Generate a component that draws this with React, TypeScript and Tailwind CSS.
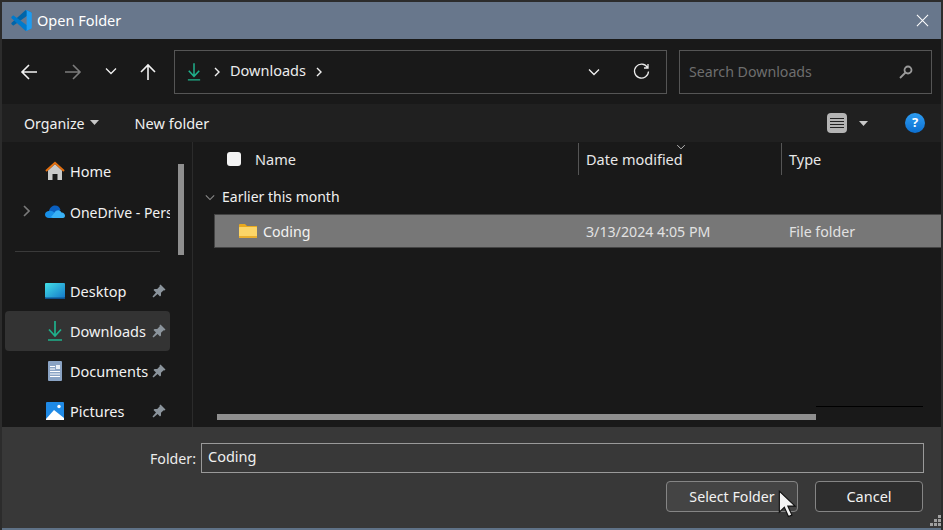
import type React from "react"

const font = "font-['Noto_Sans','Liberation_Sans',sans-serif]"

const VsCodeIcon = () => (
  <svg width="21" height="21" viewBox="0 0 100 100">
    <path fill="#0065a9" d="M96 11 75 1c-2.500-1-5.500-.5-7.500 1.500L2.800 61c-2 1.800-2 4.800 0 6.600l5.600 5c1.500 1.400 3.800 1.500 5.400.3L97 12.500z" />
    <path fill="#007acc" d="M96 89 75 99c-2.500 1-5.500.5-7.500-1.500L2.800 39c-2-1.800-2-4.800 0-6.600l5.600-5c1.500-1.400 3.800-1.500 5.400-.3L97 87.500z" />
    <path fill="#1f9cf0" d="M75 99c-2.500 1.200-5.500.7-7.500-1.300 2.500 2.500 7 .7 7-2.800V5c0-3.500-4.500-5.300-7-2.800C69.500.2 72.500-.3 75 1l20.600 9.900c2.200 1 3.400 3.100 3.400 5.400v67.400c0 2.300-1.200 4.400-3.400 5.400z" />
  </svg>
)

const DownloadIcon = ({ size = 16 }: { size?: number }) => (
  <svg width={size} height={size + 4} viewBox="0 0 16 20" fill="none" stroke="#1fb18c" strokeWidth="1.700">
    <path d="M8 0v14.500M2 8.500 8 15l6-6.500M1 19h14" />
  </svg>
)

const PinIcon = () => (
  <svg width="14" height="14" viewBox="0 0 14 14" fill="#8b949c">
    <path d="M8.500.5 13.500 5.500 12.500 6.500 11.700 6.200 9 8.800 9 11.500 8 12.500 5.600 10 1.500 13.500.5 12.500 4 8.400 1.500 6 2.500 5 5.200 5 7.800 2.300 7.500 1.500z" />
  </svg>
)

const HomeIcon = () => (
  <svg width="20" height="20" viewBox="0 0 20 20">
    <path fill="#c9c9c9" d="M3 9.500 10 3l7 6.500V19h-4.500v-6h-5v6H3z" />
    <path fill="none" stroke="#e26f10" strokeWidth="2" d="M1 10 10 1.800 19 10" />
  </svg>
)

const CloudIcon = () => (
  <svg width="20" height="13" viewBox="0 0 20 13">
    <path fill="#0a5fc0" d="M4 6c.5-3 3-5.500 6-5.500S15 2.500 15.500 5L10 9 3 8z" />
    <path fill="#1890e8" d="M4 13C1.500 13 0 11.500 0 9.500S2 6 4 6c2-.5 4 .5 5.500 2L13 11l-2 2z" />
    <path fill="#39b1f5" d="M8 13h10c1.500 0 2-1.200 2-2.400 0-1.800-1.700-3.300-3.500-3.100C15 4.500 11.500 4.500 9.500 7.500 8.500 9 7 11 6 12z" />
  </svg>
)

const DesktopIcon = () => (
  <svg width="20" height="16" viewBox="0 0 20 16">
    <defs>
      <linearGradient id="desk" x1="0" y1="0" x2="1" y2="1">
        <stop offset="0" stopColor="#43e0e8" />
        <stop offset="1" stopColor="#1478c8" />
      </linearGradient>
    </defs>
    <rect width="20" height="15" rx="1" fill="url(#desk)" />
    <rect y="14.500" width="20" height="1.500" fill="#0d4f8c" />
  </svg>
)

const DocumentIcon = () => (
  <svg width="14" height="20" viewBox="0 0 14 20">
    <rect width="14" height="20" rx="1" fill="#8aa3c4" />
    <path stroke="#fff" strokeWidth="1" d="M2 5.500h5M2 8h5M2 10.500h10M2 13h10M2 15.500h10" />
    <rect x="8" y="4" width="4" height="4" fill="#e8eef6" />
  </svg>
)

const PictureIcon = () => (
  <svg width="18" height="18" viewBox="0 0 18 18">
    <rect width="18" height="18" rx="1" fill="#1f8ae6" />
    <circle cx="13" cy="4.500" r="1.700" fill="#fff" />
    <path fill="#fff" d="M0 17 8 8l10 8v2H0z" />
  </svg>
)

const FolderIcon = () => (
  <svg width="18" height="14" viewBox="0 0 18 14">
    <path fill="#e8a91f" d="M0 1a1 1 0 0 1 1-1h5l2 2h10v11H0z" />
    <rect y="3" width="18" height="11" rx="0.500" fill="#fbd568" />
    <rect y="12" width="18" height="2" fill="#e9ae2e" />
  </svg>
)

const Chevron = ({ className, color = "#f0f0f0" }: { className?: string; color?: string }) => (
  <svg className={className} width="12" height="8" viewBox="0 0 12 8" fill="none" stroke={color} strokeWidth="1.300">
    <path d="M1 1.500 6 6.500 11 1.500" />
  </svg>
)

const Caret = () => (
  <svg width="9" height="5" viewBox="0 0 9 5" fill="#c8c8c8">
    <path d="M0 0h9L4.500 5z" />
  </svg>
)

const Arrow = ({ d, color = "#f2f2f2" }: { d: string; color?: string }) => (
  <svg width="18" height="18" viewBox="0 0 18 18" fill="none" stroke={color} strokeWidth="1.600">
    <path d={d} />
  </svg>
)

const PathSep = () => (
  <svg width="6" height="10" viewBox="0 0 6 10" fill="none" stroke="#f0f0f0" strokeWidth="1.400">
    <path d="M1 1l4 4-4 4" />
  </svg>
)

interface NavItem {
  label: string
  icon: React.ReactNode
  pinned?: boolean
  active?: boolean
  expandable?: boolean
}

const topItems: NavItem[] = [
  { label: "Home", icon: <HomeIcon /> },
  { label: "OneDrive - Personal", icon: <CloudIcon />, expandable: true },
]

const pinnedItems: NavItem[] = [
  { label: "Desktop", icon: <DesktopIcon />, pinned: true },
  { label: "Downloads", icon: <DownloadIcon />, pinned: true, active: true },
  { label: "Documents", icon: <DocumentIcon />, pinned: true },
  { label: "Pictures", icon: <PictureIcon />, pinned: true },
]

const SideRow = ({ item }: { item: NavItem }) => (
  <div className={`h-10 shrink-0 flex items-center rounded-sm ${item.active ? "bg-[#333333]" : ""}`}>
    <div className="w-10 shrink-0 flex justify-center pl-[3px]">
      {item.expandable && (
        <svg width="7" height="12" viewBox="0 0 7 12" fill="none" stroke="#7a7a7a" strokeWidth="1.600">
          <path d="M1 1l5 5-5 5" />
        </svg>
      )}
    </div>
    <div className="w-[25px] shrink-0 flex justify-center pr-[5px]">{item.icon}</div>
    <span
      className={`${item.pinned ? "w-[82px]" : "flex-1 min-w-0"} ${item.expandable ? "text-[14px]" : "text-[14.5px]"} pt-[2px] overflow-hidden whitespace-nowrap text-[#f2f2f2]`}
    >
      {item.label}
    </span>
    {item.pinned && <PinIcon />}
  </div>
)

export default function App() {
  return (
    <div className={`${font} w-[943px] h-[530px] overflow-hidden bg-[#2c2c2c] pt-[2px] px-[2px] flex flex-col relative`}>
      {/* title bar */}
      <div className="h-[37px] shrink-0 bg-[#68778c] flex items-center pl-[9px] pr-[12px]">
        <VsCodeIcon />
        <span className="ml-[5px] text-[14.5px] text-white">Open Folder</span>
        <svg className="ml-auto" width="13" height="13" viewBox="0 0 14 14" fill="none" stroke="#fff" strokeWidth="1.100">
          <path d="M1 1l12 12M13 1 1 13" />
        </svg>
      </div>

      {/* nav bar */}
      <div className="h-[65px] shrink-0 bg-[#191919] flex items-center pl-[18px] pr-[9px]">
        <Arrow d="M17 9H2M9 2 2 9l7 7" />
        <span className="ml-[26px]">
          <Arrow d="M1 9h15M9 2l7 7-7 7" color="#7c7c7c" />
        </span>
        <Chevron className="ml-[23px] -mt-[2px]" />
        <span className="ml-[22px]">
          <Arrow d="M9 17V2M2 9l7-7 7 7" />
        </span>
        <div className="ml-[17px] w-[493px] h-11 border border-[#555555] flex items-center pl-[12px] pr-[16px]">
          <DownloadIcon size={14} />
          <span className="ml-[13px]">
            <PathSep />
          </span>
          <span className="ml-[10px] -mt-[2px] text-[14.5px] text-[#ececec]">Downloads</span>
          <span className="ml-[10px]">
            <PathSep />
          </span>
          <Chevron className="ml-auto" />
          <svg className="ml-[33px]" width="17" height="17" viewBox="0 0 17 17" fill="none" stroke="#ececec" strokeWidth="1.300">
            <path d="M14.500 4.500A7 7 0 1 0 15.500 8.500M15 1v4h-4" />
          </svg>
        </div>
        <div className="ml-3 w-[253px] h-11 border border-[#555555] flex items-center pl-[9px] pr-[18px]">
          <span className="text-[14.2px] text-[#6e6e6e]">Search Downloads</span>
          <svg className="ml-auto" width="14" height="14" viewBox="0 0 14 14" fill="none" stroke="#9a9a9a" strokeWidth="1.800">
            <circle cx="9" cy="5" r="3.500" />
            <path d="M6.500 7.500 1 13" />
          </svg>
        </div>
      </div>

      {/* toolbar */}
      <div className="h-[38px] shrink-0 bg-[#202020] flex items-center pl-[22px] pr-[16px]">
        <span className="pt-[2px] text-[14.2px] text-[#f0f0f0]">Organize</span>
        <span className="ml-[5px] mb-px">
          <Caret />
        </span>
        <span className="ml-[36px] pt-[2px] text-[14.5px] text-[#f0f0f0]">New folder</span>
        <div className="ml-auto w-5 h-5 rounded-sm bg-[#b4b4b4] flex flex-col justify-center gap-[2px] px-[3px]">
          <div className="h-px bg-[#222222]" />
          <div className="h-px bg-[#222222]" />
          <div className="h-px bg-[#222222]" />
          <div className="h-px bg-[#222222]" />
        </div>
        <span className="ml-[12px]">
          <Caret />
        </span>
        <div className="ml-[37px] w-5 h-5 rounded-full bg-gradient-to-b from-[#2d9df2] to-[#0c6fd0] flex items-center justify-center text-[13px] font-bold text-white">
          ?
        </div>
      </div>

      {/* main */}
      <div className="h-[285px] shrink-0 bg-[#191919] flex overflow-hidden relative">
        <div className="w-[165px] ml-[3px] shrink-0 pt-[9px] flex flex-col">
          {topItems.map((item) => (
            <SideRow key={item.label} item={item} />
          ))}
          <div className="h-10 shrink-0 flex items-center pl-[10px] pr-[10px]">
            <div className="h-px w-full bg-[#3a3a3a]" />
          </div>
          {pinnedItems.map((item) => (
            <SideRow key={item.label} item={item} />
          ))}
        </div>
        <div className="w-[22px] shrink-0 pl-2 pt-[22px]">
          <div className="w-[6px] h-[91px] bg-[#8f8f8f]" />
        </div>
        <div className="w-px shrink-0 bg-[#2b2b2b]" />

        <div className="flex-1 min-w-0 flex flex-col">
          <div className="h-[34px] shrink-0 flex items-center text-[14.5px] text-[#e8e8e8] pl-[34px]">
            <div className="w-[14px] h-[14px] rounded-[3px] bg-[#f4f4f4]" />
            <span className="ml-[14px] w-[323px] pt-[2px]">Name</span>
            <div className="w-px h-8 bg-[#555555]" />
            <span className="ml-[7px] w-[195px] pt-[2px]">Date modified</span>
            <div className="w-px h-8 bg-[#555555]" />
            <span className="ml-[7px] pt-[2px]">Type</span>
          </div>
          <div className="h-[42px] shrink-0 flex items-center pl-[12px]">
            <Chevron className="w-[10px] h-[7px]" color="#8a8a8a" />
            <span className="ml-[7px] -mt-[2px] text-[14px] text-[#f0f0f0]">Earlier this month</span>
          </div>
          <div className="h-[34px] shrink-0 ml-[21px] -mt-[4px] bg-[#777777] border-y border-l border-[#444444] flex items-center text-[14.2px] pl-6">
            <FolderIcon />
            <span className="ml-[6px] w-[323px] pt-px text-[#f2f2f2]">Coding</span>
            <span className="w-[203px] pt-px text-[#e2e2e2]">3/13/2024 4:05 PM</span>
            <span className="pt-px text-[#e2e2e2]">File folder</span>
          </div>
          <div className="flex-1" />
          <div className="h-[6px] w-[599px] ml-[24px] mb-[7px] bg-[#8f8f8f]" />
        </div>

        {/* sort chevron and the stray line over the list */}
        <Chevron className="absolute left-[674px] top-[2px] w-[10px] h-[6px]" color="#bdbdbd" />
        <div className="absolute left-[814px] top-[264px] w-[107px] h-px bg-black" />
      </div>

      {/* footer */}
      <div className="h-[101px] shrink-0 bg-[#383838] pt-4 pr-[18px] flex flex-col">
        <div className="flex items-center h-[30px] -mr-px">
          <span className="ml-[148px] w-[51px] text-[14.2px] pt-px text-[#ececec]">Folder:</span>
          <div className="flex-1 h-[30px] border border-[#9a9a9a] pl-[6px] pb-[2px] flex items-center text-[14.5px] text-[#f0f0f0]">
            Coding
          </div>
        </div>
        <div className="mt-[8px] flex justify-end gap-[17px]">
          <div className="w-[132px] h-[31px] rounded-[4px] bg-[#444444] border border-[#858585] flex items-center justify-center text-[14.2px] text-[#f2f2f2]">
            Select Folder
          </div>
          <div className="w-[108px] h-[31px] rounded-[4px] bg-[#2e2e2e] border border-[#858585] flex items-center justify-center text-[14.5px] text-[#f2f2f2]">
            Cancel
          </div>
        </div>
      </div>
      <div className="flex-1 bg-[#5f7287]" />

      {/* mouse pointer */}
      <svg className="absolute left-[778px] top-[490px]" width="19" height="28" viewBox="0 0 16 24">
        <path fill="#f4f4f4" stroke="#111" strokeWidth="1" d="M1 1v18l4.300-4.200 3.500 8 3-1.300-3.500-7.700H14.500z" />
      </svg>
      {/* resize grip */}
      <div className="absolute left-[930px] top-[515px] grid grid-cols-3 gap-px">
        <span />
        <span />
        <span className="w-[3px] h-[3px] bg-[#a0a0a0]" />
        <span />
        <span className="w-[3px] h-[3px] bg-[#a0a0a0]" />
        <span className="w-[3px] h-[3px] bg-[#a0a0a0]" />
        <span className="w-[3px] h-[3px] bg-[#a0a0a0]" />
        <span className="w-[3px] h-[3px] bg-[#a0a0a0]" />
        <span className="w-[3px] h-[3px] bg-[#a0a0a0]" />
      </div>
    </div>
  )
}
